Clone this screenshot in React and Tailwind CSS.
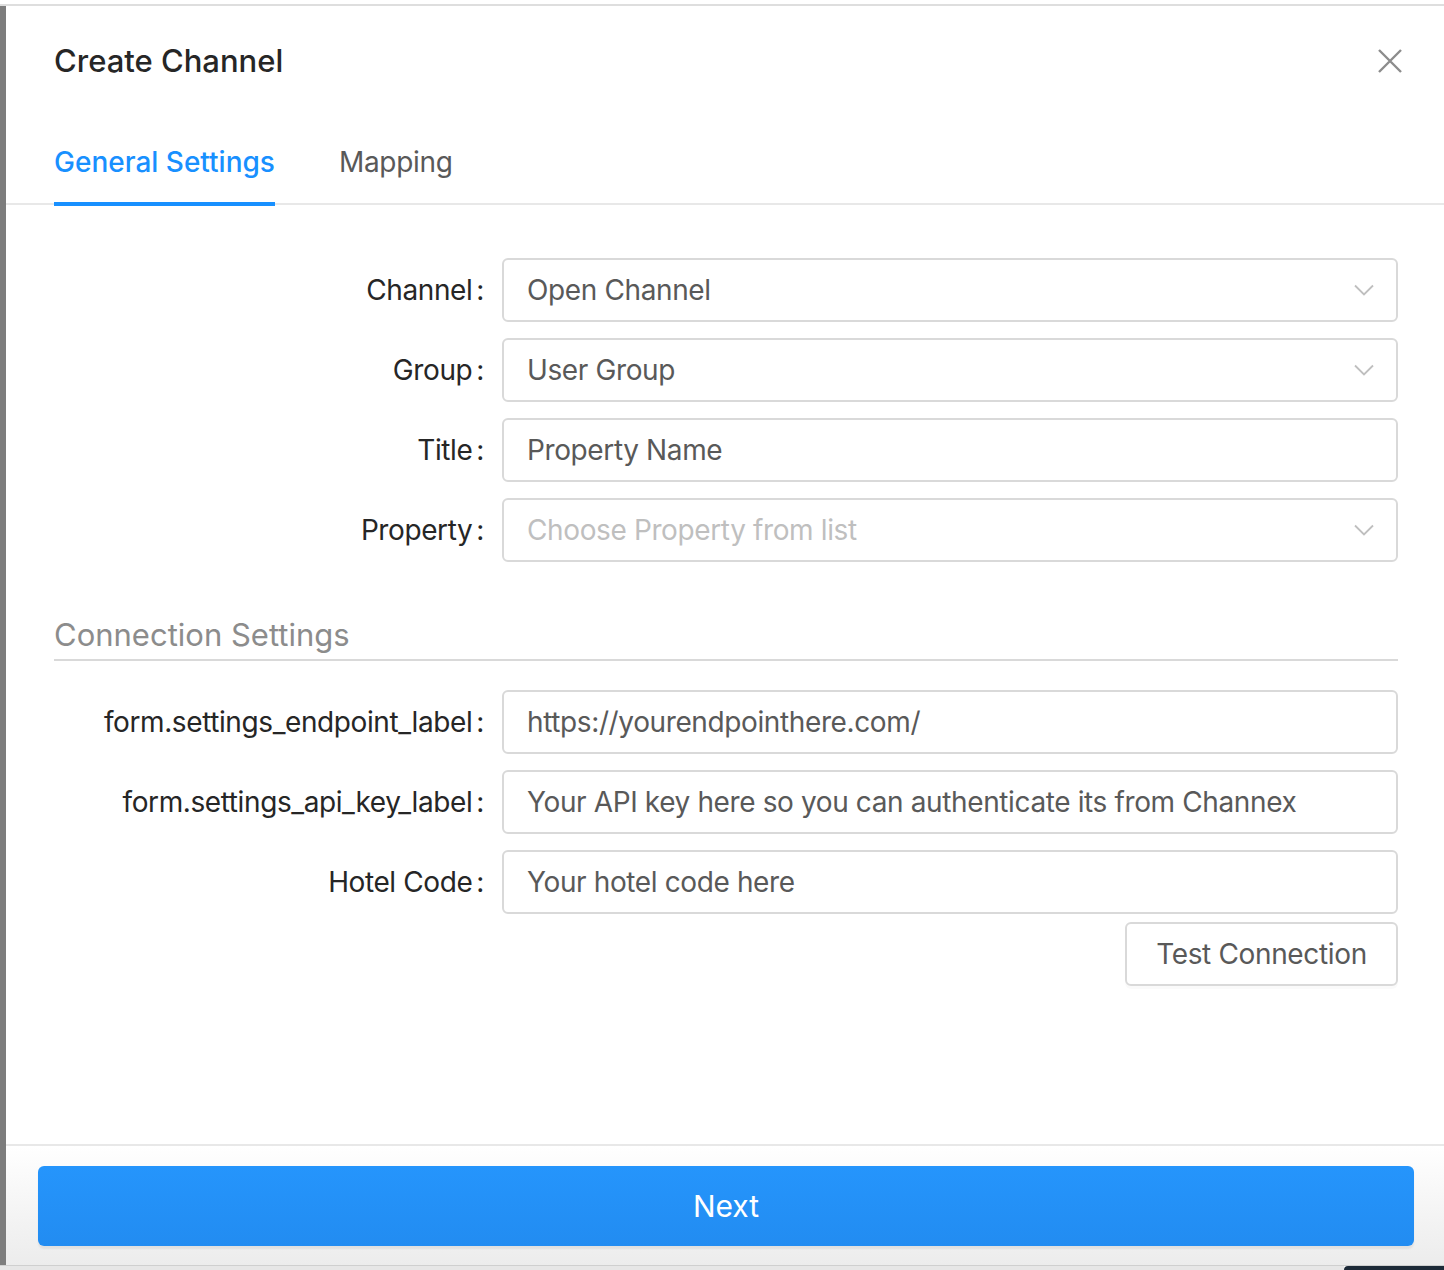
import React from 'react';

const FONT = { fontFamily: 'Inter, "Noto Sans", sans-serif' };

const Chevron = () => (
  <svg width="20" height="12" viewBox="0 0 20 12" fill="none" className="shrink-0">
    <path d="M1 1.5 L10 10.5 L19 1.5" stroke="#bfbfbf" strokeWidth="1.8" />
  </svg>
);

const CloseIcon = () => (
  <svg width="24" height="24" viewBox="0 0 24 24" fill="none">
    <path d="M1 1 L23 23 M23 1 L1 23" stroke="#8c8c8c" strokeWidth="2.4" />
  </svg>
);

const FormRow = ({ label, value, placeholder, select }) => (
  <div className="flex items-center h-[64px]">
    <label className="w-[448px] shrink-0 flex justify-end items-center pr-[16px] text-[28px] tracking-[-0.4px] text-[#262626]">
      <span>{label}</span>
      <span className="ml-[4px] mr-[2px]">:</span>
    </label>
    <div className="flex-1 h-[64px] flex items-center justify-between border-2 border-[#d9d9d9] rounded-[6px] pl-[23px] pr-[22px] text-[28px] tracking-[-0.38px]">
      {value ? (
        <span className="text-[#595959]">{value}</span>
      ) : (
        <span className="text-[#bfbfbf]">{placeholder}</span>
      )}
      {select && <Chevron />}
    </div>
  </div>
);

const App = () => {
  return (
    <div className="w-[1444px] h-[1270px] flex flex-col bg-white overflow-hidden" style={FONT}>
      <div className="h-[4px] bg-white" />
      <div className="h-[2px] bg-[#dedede]" />

      <div className="flex-1 flex">
        <div className="w-[6px] bg-[#7d7d7d]" />

        <div className="flex-1 flex flex-col bg-white">
          {/* Header */}
          <div className="h-[110px] flex items-center justify-between pl-[48px] pr-[42px]">
            <h1 className="text-[31px] font-medium text-[#262626]">Create Channel</h1>
            <button type="button" aria-label="Close" className="p-0">
              <CloseIcon />
            </button>
          </div>

          {/* Tabs */}
          <div className="relative h-[90px] flex pl-[48px]">
            <div className="absolute left-0 right-0 bottom-[1px] h-[2px] bg-[#e8e8e8]" />
            <div className="relative h-[90px] pt-[6px] flex items-center border-b-4 border-[#1890ff] text-[28px] font-medium text-[#1890ff] mr-[64px]">
              General Settings
            </div>
            <div className="relative h-[90px] pt-[6px] pb-[4px] flex items-center text-[28px] tracking-[-0.3px] text-[#595959]">
              Mapping
            </div>
          </div>

          {/* Body */}
          <div className="flex-1 pl-[48px] pr-[46px]">
            <div className="mt-[52px] flex flex-col gap-[16px]">
              <FormRow label="Channel" value="Open Channel" select />
              <FormRow label="Group" value="User Group" select />
              <FormRow label="Title" value="Property Name" />
              <FormRow label="Property" placeholder="Choose Property from list" select />
            </div>

            <div className="mt-[53px] pb-[4px] border-b-2 border-[#d9d9d9]">
              <h2 className="leading-[40px] text-[31px] text-[#8c8c8c]">Connection Settings</h2>
            </div>

            <div className="mt-[29px] flex flex-col gap-[16px]">
              <FormRow label="form.settings_endpoint_label" value="https://yourendpointhere.com/" />
              <FormRow label="form.settings_api_key_label" value="Your API key here so you can authenticate its from Channex" />
              <FormRow label="Hotel Code" value="Your hotel code here" />
            </div>

            <div className="mt-[8px] flex justify-end">
              <button
                type="button"
                className="h-[64px] w-[273px] border-2 border-[#d9d9d9] rounded-[6px] bg-white text-[28px] tracking-[-0.35px] text-[#595959] shadow-[0_3px_0_rgba(0,0,0,0.02)]"
              >
                Test Connection
              </button>
            </div>
          </div>

          {/* Footer */}
          <div className="h-[121px] border-t-2 border-[#e8e8e8] bg-gradient-to-b from-white to-[#ececec] pt-[20px] pl-[32px] pr-[30px]">
            <button
              type="button"
              className="w-full h-[80px] rounded-[6px] bg-gradient-to-b from-[#2595fc] to-[#228cf1] text-white text-[30px] shadow-[0_3px_2px_rgba(0,0,0,0.06)]"
            >
              Next
            </button>
          </div>
        </div>
      </div>

      <div className="h-[5px] flex border-t border-[#cfcfcf]">
        <div className="flex-1 bg-[#e6e6e6]" />
        <div className="w-[100px] bg-[#1d2a38] rounded-tl-[30px]" />
      </div>
    </div>
  );
};

export default App;
